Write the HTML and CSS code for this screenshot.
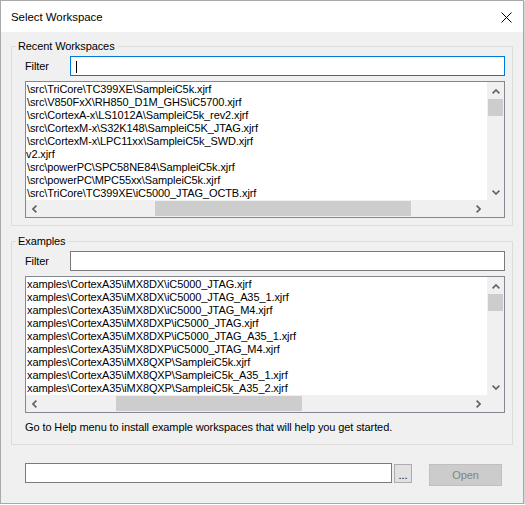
FILE: index.html
```html
<!DOCTYPE html>
<html>
<head>
<meta charset="utf-8">
<title>Select Workspace</title>
<link rel="stylesheet" href="styles.css">
</head>
<body>
<div class="window">
  <div class="titlebar">
    <span class="title">Select Workspace</span>
    <svg class="close" width="11" height="11" viewBox="0 0 11 11"><path d="M0.5 0.5 L10.5 10.5 M10.5 0.5 L0.5 10.5" stroke="#000" stroke-width="1" fill="none"/></svg>
  </div>
  <div class="content">
    <section class="group recent">
      <div class="legend">Recent Workspaces</div>
      <div class="filter-row">
        <span class="filter-label">Filter</span>
        <div class="textbox focused"><span class="caret"></span></div>
      </div>
      <div class="listbox">
        <div class="items">
          <div class="item">\src\TriCore\TC399XE\SampleiC5k.xjrf</div>
          <div class="item">\src\V850FxX\RH850_D1M_GHS\iC5700.xjrf</div>
          <div class="item">\src\CortexA-x\LS1012A\SampleiC5k_rev2.xjrf</div>
          <div class="item">\src\CortexM-x\S32K148\SampleiC5K_JTAG.xjrf</div>
          <div class="item">\src\CortexM-x\LPC11xx\SampleiC5k_SWD.xjrf</div>
          <div class="item short">v2.xjrf</div>
          <div class="item">\src\powerPC\SPC58NE84\SampleiC5k.xjrf</div>
          <div class="item">\src\powerPC\MPC55xx\SampleiC5k.xjrf</div>
          <div class="item">\src\TriCore\TC399XE\iC5000_JTAG_OCTB.xjrf</div>
        </div>
        <div class="vscroll">
          <div class="arrow vert"><svg width="8" height="5" viewBox="0 0 8 5"><path d="M0.6 4.4 L4 1 L7.4 4.4" fill="none" stroke="#606060" stroke-width="1.6"/></svg></div>
          <div class="vthumb"></div>
          <div class="track"></div>
          <div class="arrow vert"><svg width="8" height="5" viewBox="0 0 8 5"><path d="M0.6 0.6 L4 4 L7.4 0.6" fill="none" stroke="#606060" stroke-width="1.6"/></svg></div>
        </div>
        <div class="hscroll">
          <div class="arrow"><svg width="5" height="8" viewBox="0 0 5 8"><path d="M4.4 0.6 L1 4 L4.4 7.4" fill="none" stroke="#606060" stroke-width="1.6"/></svg></div>
          <div class="hthumb" style="margin-left:112px;width:256px"></div>
          <div class="track"></div>
          <div class="arrow"><svg width="5" height="8" viewBox="0 0 5 8"><path d="M0.6 0.6 L4 4 L0.6 7.4" fill="none" stroke="#606060" stroke-width="1.6"/></svg></div>
        </div>
        <div class="corner"></div>
      </div>
    </section>

    <section class="group examples">
      <div class="legend">Examples</div>
      <div class="filter-row">
        <span class="filter-label">Filter</span>
        <div class="textbox"></div>
      </div>
      <div class="listbox">
        <div class="items">
          <div class="item">xamples\CortexA35\iMX8DX\iC5000_JTAG.xjrf</div>
          <div class="item">xamples\CortexA35\iMX8DX\iC5000_JTAG_A35_1.xjrf</div>
          <div class="item">xamples\CortexA35\iMX8DX\iC5000_JTAG_M4.xjrf</div>
          <div class="item">xamples\CortexA35\iMX8DXP\iC5000_JTAG.xjrf</div>
          <div class="item">xamples\CortexA35\iMX8DXP\iC5000_JTAG_A35_1.xjrf</div>
          <div class="item">xamples\CortexA35\iMX8DXP\iC5000_JTAG_M4.xjrf</div>
          <div class="item">xamples\CortexA35\iMX8QXP\SampleiC5k.xjrf</div>
          <div class="item">xamples\CortexA35\iMX8QXP\SampleiC5k_A35_1.xjrf</div>
          <div class="item">xamples\CortexA35\iMX8QXP\SampleiC5k_A35_2.xjrf</div>
        </div>
        <div class="vscroll">
          <div class="arrow vert"><svg width="8" height="5" viewBox="0 0 8 5"><path d="M0.6 4.4 L4 1 L7.4 4.4" fill="none" stroke="#606060" stroke-width="1.6"/></svg></div>
          <div class="vthumb"></div>
          <div class="track"></div>
          <div class="arrow vert"><svg width="8" height="5" viewBox="0 0 8 5"><path d="M0.6 0.6 L4 4 L7.4 0.6" fill="none" stroke="#606060" stroke-width="1.6"/></svg></div>
        </div>
        <div class="hscroll">
          <div class="arrow"><svg width="5" height="8" viewBox="0 0 5 8"><path d="M4.4 0.6 L1 4 L4.4 7.4" fill="none" stroke="#606060" stroke-width="1.6"/></svg></div>
          <div class="hthumb" style="margin-left:73px;width:186px"></div>
          <div class="track"></div>
          <div class="arrow"><svg width="5" height="8" viewBox="0 0 5 8"><path d="M0.6 0.6 L4 4 L0.6 7.4" fill="none" stroke="#606060" stroke-width="1.6"/></svg></div>
        </div>
        <div class="corner"></div>
      </div>
      <p class="hint">Go to Help menu to install example workspaces that will help you get started.</p>
    </section>

    <div class="bottom-row">
      <div class="textbox path"></div>
      <button class="browse">...</button>
      <button class="open" disabled>Open</button>
    </div>
  </div>
</div>
</body>
</html>
```
FILE: styles.css
```css
* { box-sizing: border-box; }

html, body {
  margin: 0;
  padding: 0;
  background: #ffffff;
}

body {
  font-family: "Liberation Sans", Arial, sans-serif;
  font-size: 11px;
  letter-spacing: -0.1px;
  color: #000;
}

.window {
  width: 524px;
  height: 504px;
  border: 1px solid #a9a9a9;
  box-shadow: 1px 1px 0 #d4d4d4;
  background: #f0f0f0;
  display: flex;
  flex-direction: column;
}

.titlebar {
  height: 31px;
  flex: none;
  background: #ffffff;
  display: flex;
  align-items: center;
  padding: 1px 11px 0 10px;
}

.title {
  font-size: 11.4px;
  letter-spacing: 0;
  flex: 1;
}

.close {
  display: block;
}

.content {
  display: flex;
  flex-direction: column;
}

.group {
  margin: 14px 10px 0 10px;
  border: 1px solid #dcdcdc;
  padding: 0 7px 7px 13px;
  display: flex;
  flex-direction: column;
}

.group.examples {
  margin-top: 15px;
  padding-bottom: 10px;
}

.legend {
  align-self: flex-start;
  height: 13px;
  line-height: 13px;
  margin: -7px 0 0 -9px;
  padding: 0 2px;
  background: #f0f0f0;
  white-space: nowrap;
}

.filter-row {
  margin-top: 3px;
  height: 20px;
  display: flex;
  align-items: center;
}

.filter-label {
  width: 45px;
  flex: none;
}

.textbox {
  flex: 1;
  height: 20px;
  background: #ffffff;
  border: 1px solid #7a7a7a;
  display: flex;
  align-items: center;
  padding-left: 5px;
}

.textbox.focused {
  border-color: #0078d7;
}

.caret {
  width: 1px;
  height: 12px;
  background: #000;
  margin-top: 1px;
}

.listbox {
  margin-top: 5px;
  height: 137px;
  border: 1px solid #828790;
  background: #ffffff;
  display: grid;
  grid-template-columns: 1fr 17px;
  grid-template-rows: 1fr 17px;
}

.items {
  overflow: hidden;
  padding: 1px 0 0 1px;
  white-space: nowrap;
  line-height: 13px;
}

.item {
  height: 13px;
}

.item.short {
  margin-left: -1px;
}

.vscroll {
  background: #f0f0f0;
  display: flex;
  flex-direction: column;
}

.hscroll {
  background: #f0f0f0;
  display: flex;
}

.corner {
  background: #f0f0f0;
}

.arrow {
  width: 17px;
  height: 17px;
  flex: none;
  display: flex;
  align-items: center;
  justify-content: center;
}

.arrow svg { display: block; }

.arrow.vert {
  padding-top: 2px;
}

.track {
  flex: 1;
}

.vthumb {
  height: 17px;
  margin: 0 1px;
  background: #cdcdcd;
  flex: none;
}

.hthumb {
  height: 15px;
  margin-top: 1px;
  background: #cdcdcd;
  flex: none;
}

.hint {
  margin: 8px 0 0 0;
  line-height: 13px;
  white-space: nowrap;
}

.bottom-row {
  margin-top: 18px;
  padding: 0 21px 0 24px;
  display: flex;
  align-items: flex-start;
}

.textbox.path {
  flex: none;
  width: 367px;
}

button {
  font-family: inherit;
  font-size: 11px;
  letter-spacing: -0.1px;
  margin: 0;
  padding: 0;
}

.browse {
  margin: 1px 0 0 2px;
  width: 18px;
  height: 19px;
  background: #e1e1e1;
  border: 1px solid #adadad;
  color: #000;
  line-height: 15px;
  padding-top: 3px;
}

.open {
  margin: 1px 0 0 17px;
  width: 73px;
  height: 22px;
  background: #cccccc;
  border: 1px solid #bfbfbf;
  color: #838383;
}
```
